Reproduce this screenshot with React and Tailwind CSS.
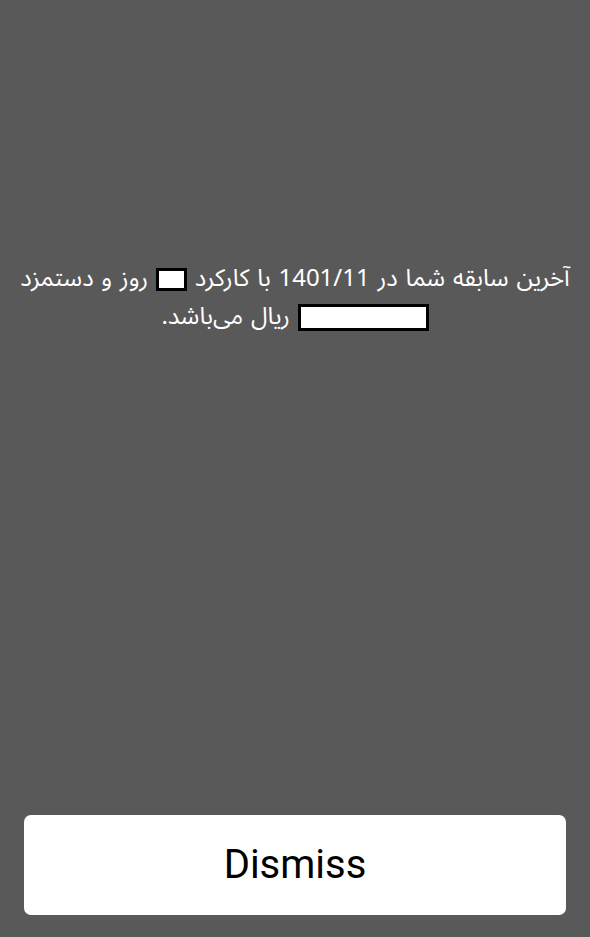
export default function App() {
  return (
    <div className="w-[590px] h-[937px] bg-[#595959] flex flex-col">
      <div className="flex-1 flex flex-col">
        <div className="h-[260px]" />
        <p
          dir="rtl"
          className="px-[12px] text-center text-white text-[24px] leading-[38px] [word-spacing:1.5px]"
          style={{ fontFamily: '"Noto Sans Arabic", "Noto Sans", "DejaVu Sans", sans-serif' }}
        >
          آخرین سابقه شما در 1401/11 با کارکرد{" "}
          <span className="inline-block align-middle w-[31px] h-[23px] bg-white border-[3px] border-black" />{" "}
          روز و دستمزد{" "}
          <span className="inline-block align-middle w-[131px] h-[27px] bg-white border-[3px] border-black" />{" "}
          ریال می‌باشد.
        </p>
      </div>
      <div className="px-[24px] pb-[22px]">
        <button
          className="w-full h-[100px] bg-white rounded-[7px] text-black text-[40px]"
          style={{ fontFamily: 'Roboto, "Liberation Sans", sans-serif' }}
        >
          Dismiss
        </button>
      </div>
    </div>
  );
}
